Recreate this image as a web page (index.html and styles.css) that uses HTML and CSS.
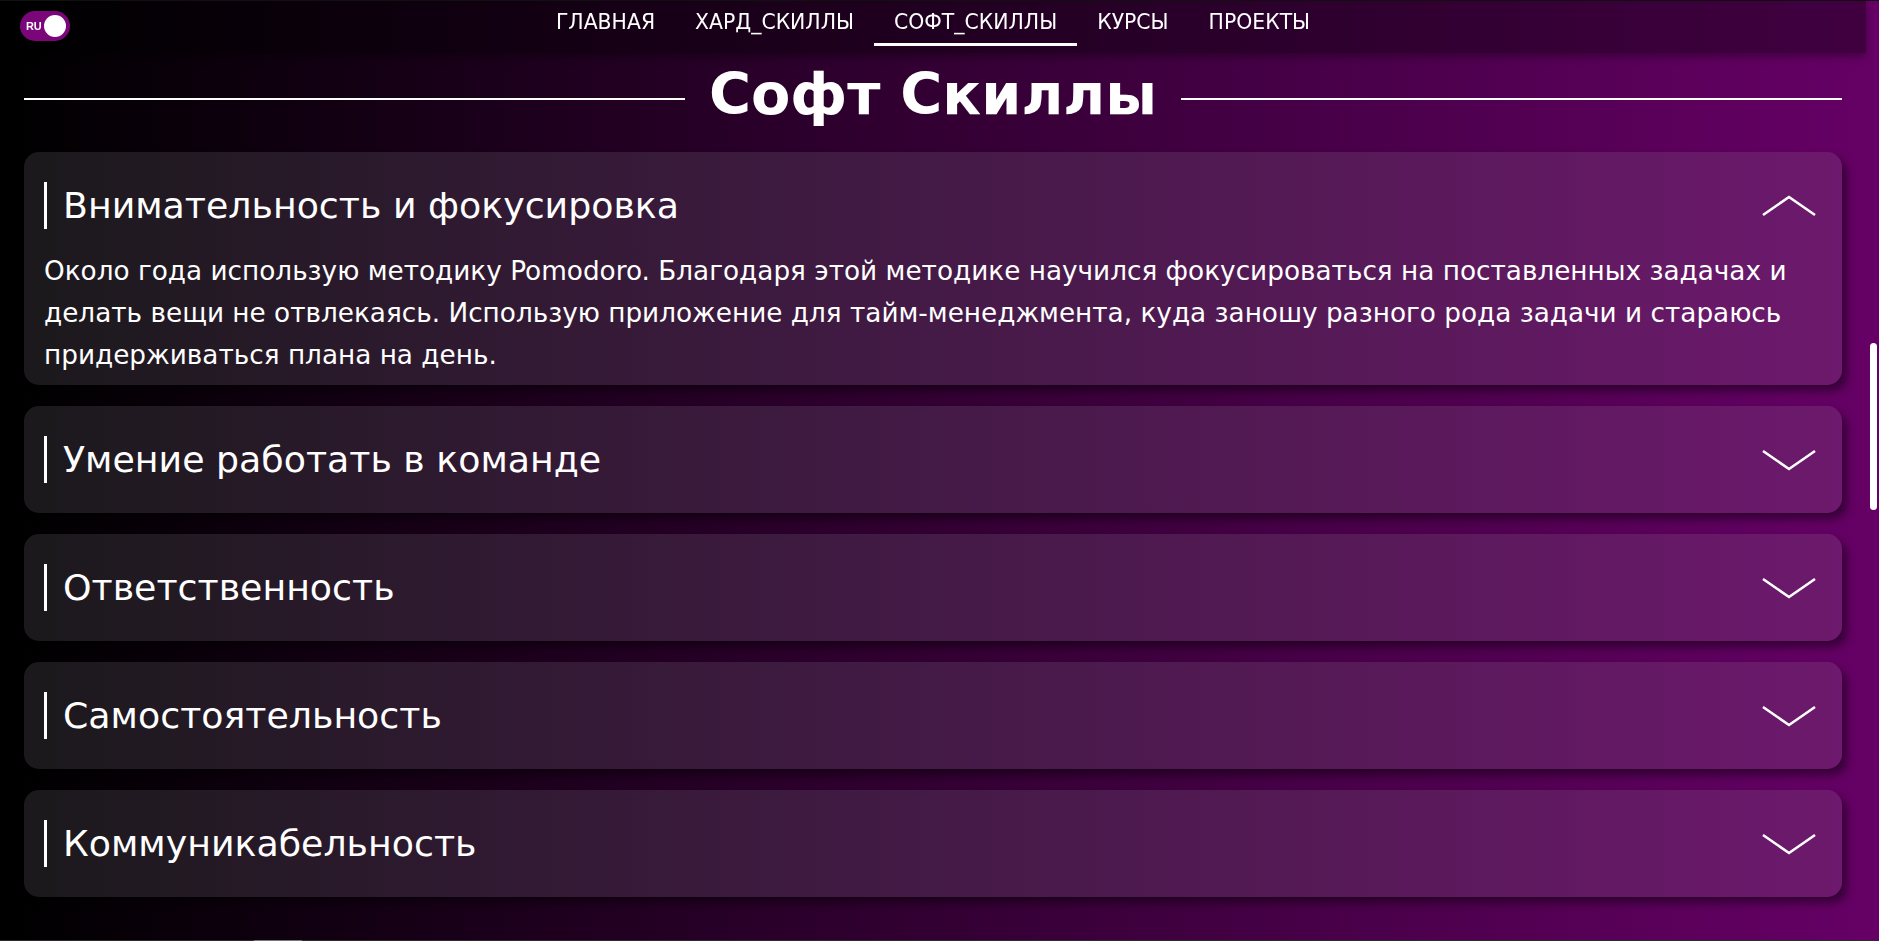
FILE: index.html
```html
<!DOCTYPE html>
<html lang="ru">
<head>
<meta charset="utf-8">
<title>Софт Скиллы</title>
<link rel="stylesheet" href="styles.css">
</head>
<body>
<header class="topbar">
  <div class="topbar-left">
    <div class="lang-toggle">
      <span class="lang-label">RU</span>
      <span class="lang-knob"></span>
    </div>
  </div>
  <nav class="menu">
    <a class="menu-link" href="#">ГЛАВНАЯ</a>
    <a class="menu-link" href="#">ХАРД_СКИЛЛЫ</a>
    <a class="menu-link active" href="#">СОФТ_СКИЛЛЫ</a>
    <a class="menu-link" href="#">КУРСЫ</a>
    <a class="menu-link" href="#">ПРОЕКТЫ</a>
  </nav>
  <div class="topbar-right"></div>
</header>

<main class="page">
  <h1 class="section-title"><span class="rule"></span><span class="section-text">Софт Скиллы</span><span class="rule"></span></h1>

  <section class="skills">
    <article class="skill open">
      <div class="skill-head">
        <h3 class="skill-name">Внимательность и фокусировка</h3>
        <svg class="chev" width="56" height="22" viewBox="0 0 56 22"><polyline points="2,20 28,2 54,20" fill="none" stroke="#fff" stroke-width="2.6"/></svg>
      </div>
      <p class="skill-text">Около года использую методику Pomodoro. Благодаря этой методике научился фокусироваться на поставленных задачах и делать вещи не отвлекаясь. Использую приложение для тайм-менеджмента, куда заношу разного рода задачи и стараюсь придерживаться плана на день.</p>
    </article>

    <article class="skill">
      <div class="skill-head">
        <h3 class="skill-name">Умение работать в команде</h3>
        <svg class="chev" width="56" height="22" viewBox="0 0 56 22"><polyline points="2,2 28,20 54,2" fill="none" stroke="#fff" stroke-width="2.6"/></svg>
      </div>
    </article>

    <article class="skill">
      <div class="skill-head">
        <h3 class="skill-name">Ответственность</h3>
        <svg class="chev" width="56" height="22" viewBox="0 0 56 22"><polyline points="2,2 28,20 54,2" fill="none" stroke="#fff" stroke-width="2.6"/></svg>
      </div>
    </article>

    <article class="skill">
      <div class="skill-head">
        <h3 class="skill-name">Самостоятельность</h3>
        <svg class="chev" width="56" height="22" viewBox="0 0 56 22"><polyline points="2,2 28,20 54,2" fill="none" stroke="#fff" stroke-width="2.6"/></svg>
      </div>
    </article>

    <article class="skill">
      <div class="skill-head">
        <h3 class="skill-name">Коммуникабельность</h3>
        <svg class="chev" width="56" height="22" viewBox="0 0 56 22"><polyline points="2,2 28,20 54,2" fill="none" stroke="#fff" stroke-width="2.6"/></svg>
      </div>
    </article>
  </section>
</main>

<div class="scroll-thumb"></div>
<div class="hscroll"><span class="hscroll-thumb"></span></div>
</body>
</html>
```
FILE: styles.css
```css
html {
  height: 100%;
  overflow: hidden;
  background: linear-gradient(90deg, #000 0%, #330033 50%, #660066 100%);
}

body {
  margin: 0;
  min-height: 100%;
  border-top: 1px solid #111;
  box-sizing: border-box;
  font-family: "DejaVu Sans", sans-serif;
  color: #fff;
}

/* ---------- top bar ---------- */
.topbar {
  position: fixed;
  top: 1px;
  left: 0;
  width: calc(100% - 13px);
  height: 52px;
  display: grid;
  grid-template-columns: 1fr auto 1fr;
  background: rgba(0, 0, 0, 0.36);
  box-shadow: 0 4px 8px rgba(0, 0, 0, 0.3);
  z-index: 5;
}

.topbar-left {
  padding: 10px 0 0 20px;
}

.lang-toggle {
  width: 50px;
  height: 30px;
  border-radius: 15px;
  background: #7a067a;
  display: flex;
  align-items: center;
  justify-content: space-between;
  padding: 0 4px 0 6px;
  box-sizing: border-box;
}

.lang-label {
  font-family: "Liberation Sans", sans-serif;
  font-weight: 700;
  font-size: 11px;
  letter-spacing: -0.3px;
  color: #fff;
}

.lang-knob {
  width: 22px;
  height: 22px;
  border-radius: 50%;
  background: #fff;
}

.menu {
  display: flex;
  align-items: flex-start;
}

.menu-link {
  display: block;
  padding: 9px 20px 9px;
  font-size: 20.4px;
  line-height: 24px;
  color: #fff;
  text-decoration: none;
  border-bottom: 3px solid transparent;
}

.menu-link.active {
  border-bottom-color: #fff;
}

/* ---------- page ---------- */
.page {
  width: calc(100% - 13px);
  padding: 61px 24px 0;
  box-sizing: border-box;
}

.section-title {
  margin: 0;
  display: flex;
  align-items: center;
  gap: 24px;
  font-size: 57.3px;
  line-height: 66px;
  font-weight: 700;
}

.rule {
  flex: 1;
  height: 2px;
  margin-top: 8px;
  background: #fff;
}

.skills {
  margin-top: 24px;
  display: flex;
  flex-direction: column;
  gap: 21px;
}

.skill {
  border-radius: 15px;
  background: linear-gradient(90deg, #1b191c 0%, #441a46 50%, #6d196d 100%);
  box-shadow: 5px 6px 8px rgba(0, 0, 0, 0.45);
}

.skill-head {
  display: flex;
  align-items: center;
  justify-content: space-between;
  padding: 30px 25px 30px 20px;
}

.skill.open .skill-head {
  padding-bottom: 21px;
}

.skill-name {
  margin: 0;
  padding-left: 16px;
  border-left: 3px solid #fff;
  font-size: 36.3px;
  line-height: 47px;
  font-weight: 400;
}

.chev {
  display: block;
}

.skill-text {
  margin: 0;
  padding: 0 20px 9px;
  font-size: 26.3px;
  line-height: 42px;
}

/* ---------- scrollbar decorations ---------- */
.scroll-thumb {
  position: fixed;
  top: 343px;
  right: 2px;
  width: 7px;
  height: 167px;
  border-radius: 4px;
  background: #fff;
}

.hscroll {
  position: fixed;
  left: 0;
  right: 0;
  bottom: 0;
  height: 1px;
  background: #2c2c2c;
}

.hscroll-thumb {
  display: block;
  margin-left: 254px;
  width: 48px;
  height: 1px;
  background: #777;
}
```
